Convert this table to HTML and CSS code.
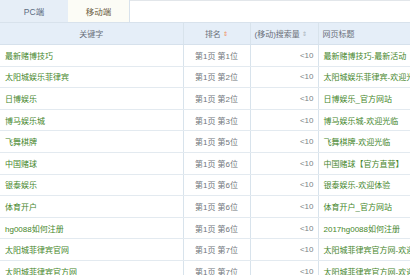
FILE: index.html
```html
<!DOCTYPE html>
<html>
<head>
<meta charset="utf-8">
<link rel="stylesheet" href="styles.css">
</head>
<body>
<div class="wrap">
  <div class="tabs">
    <div class="tab">PC端</div>
    <div class="tab active">移动端</div>
    <div class="tab-rest"></div>
  </div>
  <table class="grid">
    <colgroup>
      <col class="c1"><col class="c2"><col class="c3"><col class="c4">
    </colgroup>
    <thead>
      <tr>
        <th class="center">关键字</th>
        <th class="center">排名 <span class="sort hot">⇕</span></th>
        <th class="left">(移动)搜索量 <span class="sort">⇕</span></th>
        <th class="left">网页标题</th>
      </tr>
    </thead>
    <tbody>
      <tr><td class="kw">最新赌博技巧</td><td class="rank">第1页 第1位</td><td class="num">&lt;10</td><td class="title">最新赌博技巧-最新活动</td></tr>
      <tr><td class="kw">太阳城娱乐菲律宾</td><td class="rank">第1页 第2位</td><td class="num">&lt;10</td><td class="title">太阳城娱乐菲律宾-欢迎光临</td></tr>
      <tr><td class="kw">日博娱乐</td><td class="rank">第1页 第2位</td><td class="num">&lt;10</td><td class="title">日博娱乐_官方网站</td></tr>
      <tr><td class="kw">博马娱乐城</td><td class="rank">第1页 第3位</td><td class="num">&lt;10</td><td class="title">博马娱乐城-欢迎光临</td></tr>
      <tr><td class="kw">飞舞棋牌</td><td class="rank">第1页 第5位</td><td class="num">&lt;10</td><td class="title">飞舞棋牌-欢迎光临</td></tr>
      <tr><td class="kw">中国赌球</td><td class="rank">第1页 第6位</td><td class="num">&lt;10</td><td class="title">中国赌球【官方直营】</td></tr>
      <tr><td class="kw">银泰娱乐</td><td class="rank">第1页 第6位</td><td class="num">&lt;10</td><td class="title">银泰娱乐-欢迎体验</td></tr>
      <tr><td class="kw">体育开户</td><td class="rank">第1页 第6位</td><td class="num">&lt;10</td><td class="title">体育开户_官方网站</td></tr>
      <tr><td class="kw">hg0088如何注册</td><td class="rank">第1页 第6位</td><td class="num">&lt;10</td><td class="title">2017hg0088如何注册</td></tr>
      <tr><td class="kw">太阳城菲律宾官网</td><td class="rank">第1页 第7位</td><td class="num">&lt;10</td><td class="title">太阳城菲律宾官方网-欢迎光临</td></tr>
      <tr><td class="kw">太阳城菲律宾官方网</td><td class="rank">第1页 第7位</td><td class="num">&lt;10</td><td class="title">太阳城菲律宾官方网-欢迎光临</td></tr>
    </tbody>
  </table>
</div>
</body>
</html>
```

FILE: styles.css
```css
html, body {
  margin: 0;
  padding: 0;
  background: #ffffff;
  overflow: hidden;
}
body {
  font-family: "Liberation Sans", "Noto Sans CJK SC", sans-serif;
  font-size: 8px;
  color: #666;
}
.wrap {
  width: 470px;
}
.tabs {
  display: flex;
  height: 22px;
  border-bottom: 1px solid #d8e2ec;
}
.tab {
  width: 68px;
  display: flex;
  align-items: center;
  justify-content: center;
  background: #e6eef7;
  color: #5b6b80;
  font-size: 8.5px;
}
.tab.active {
  width: 61px;
  background: #fcfcf6;
  color: #6b5d3e;
  border-right: 1px solid #d8e2ec;
}
.tab-rest {
  flex: 1;
  border-top: 1px solid #e2e6ea;
}
.grid {
  border-collapse: collapse;
  table-layout: fixed;
  width: 470px;
}
.c1 { width: 183px; }
.c2 { width: 67px; }
.c3 { width: 68px; }
.c4 { width: 152px; }
th, td {
  height: 20.6px;
  padding: 0 4px;
  border-bottom: 1px solid #e3eaf0;
  border-left: 1px solid #d8e3ec;
  white-space: nowrap;
  overflow: hidden;
  font-weight: normal;
}
th:first-child, td:first-child {
  border-left: none;
}
thead th {
  background: #e5eef8;
  color: #6a6f78;
  height: 21px;
  border-bottom: 1px solid #d6e1ec;
}
.center { text-align: center; }
.left { text-align: left; }
.sort {
  font-size: 6px;
  color: #a8b0b8;
  vertical-align: 1px;
}
.sort.hot { color: #f08a5a; }
.kw {
  color: #45862a;
  padding-left: 5px;
}
.rank {
  text-align: center;
  color: #70757b;
}
.num {
  text-align: right;
  color: #7a7f85;
  padding-right: 4px;
}
.title {
  color: #45862a;
  padding-left: 5px;
}
```
